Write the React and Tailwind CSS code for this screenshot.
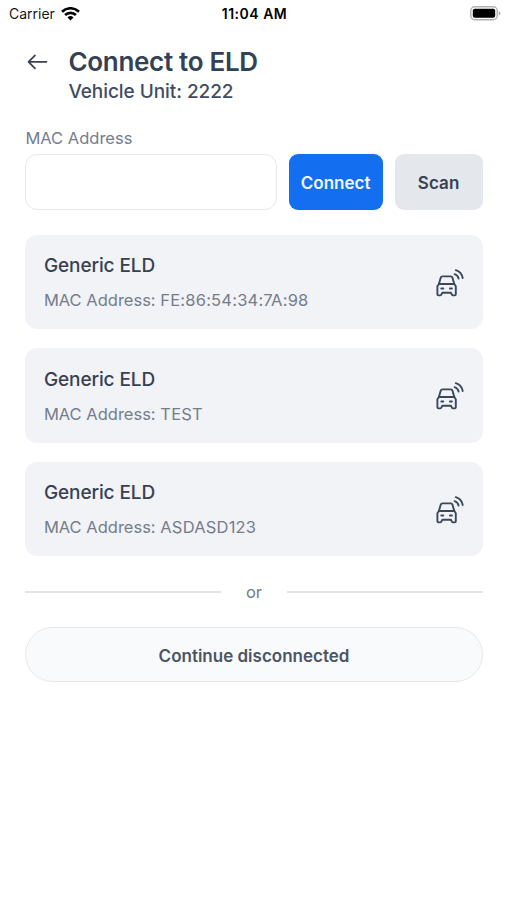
import React from "react";

const devices = ["FE:86:54:34:7A:98", "TEST", "ASDASD123"];

function WifiIcon() {
  return (
    <svg className="ml-[6px] h-[14px] w-[19px]" viewBox="0 0 19 14" fill="none" stroke="#000" strokeWidth="2.6">
      <path d="M1 4.7a12.2 12.2 0 0 1 17 0" />
      <path d="M4.1 8a7.8 7.8 0 0 1 10.8 0" />
      <path d="M9.5 13.4 6.5 10.5a4.3 4.3 0 0 1 6 0Z" fill="#000" stroke="none" />
    </svg>
  );
}

function BatteryIcon() {
  return (
    <svg className="h-[15px] w-[31px]" viewBox="0 0 31 15">
      <rect x="0.8" y="0.8" width="26.4" height="13" rx="4" fill="#fff" stroke="#b1b1b1" strokeWidth="1.4" />
      <rect x="2.8" y="2.8" width="22.4" height="9" rx="2" fill="#000" />
      <path d="M28.7 5.2q1.8.7 1.8 2.1t-1.8 2.1Z" fill="#b1b1b1" />
    </svg>
  );
}

function CarIcon() {
  return (
    <svg className="h-[30px] w-[30px]" viewBox="0 0 30 30" fill="none" stroke="#3b475a" strokeWidth="1.9" strokeLinecap="round" strokeLinejoin="round">
      <path d="M3.9 17 5.7 10.7Q6.1 9.4 7.4 9.4H15.8Q17.1 9.4 17.5 10.7L19.3 17" />
      <path d="M3.9 17H19.3L20.8 19.2V27.3Q20.8 28.4 19.7 28.4H18.1Q17.3 28.4 16.9 27.6L15.9 25.7H7.3L6.3 27.6Q5.9 28.4 5.1 28.4H3.5Q2.4 28.4 2.4 27.3V19.2Z" />
      <path d="M6.3 21.5H8.3M14.9 21.5H16.9" />
      <path d="M19.6 7.1Q22.8 8.1 23.6 11.6M20.8 3.1Q26.5 4.8 27.7 11" />
    </svg>
  );
}

function DeviceCard({ address }) {
  return (
    <button className="flex h-[94.6px] w-full items-center justify-between rounded-[12px] bg-[#f1f3f7] pr-[17.5px] pl-[18.5px] text-left">
      <span className="flex flex-col pt-[2px]">
        <span className="text-[19px] leading-[26px] font-medium tracking-[-0.1px] text-[#374151]">Generic ELD</span>
        <span className="mt-[9px] text-[16.5px] leading-[24px] text-[#757d8c]">
          MAC Address: <span className="tracking-[0.2px]">{address}</span>
        </span>
      </span>
      <CarIcon />
    </button>
  );
}

export default function App() {
  return (
    <div className="h-[900px] w-full overflow-hidden bg-white font-['Inter','Liberation_Sans',sans-serif]">
      <div className="grid h-[27px] grid-cols-3 items-center pr-[6px] pl-[9px]">
        <div className="flex items-center text-[14px] text-[#171717]">
          Carrier
          <WifiIcon />
        </div>
        <div className="-ml-[1px] text-center text-[14px] font-semibold tracking-[0.5px] whitespace-nowrap text-black">11:04 AM</div>
        <div className="flex justify-end">
          <BatteryIcon />
        </div>
      </div>

      <main className="pt-[18px] pr-[24.4px] pl-[25.4px]">
        <header className="flex">
          <svg className="mt-[6px] h-[22px] w-[24px]" viewBox="0 0 24 22" fill="none" stroke="#374151" strokeWidth="1.7" strokeLinecap="round" strokeLinejoin="round">
            <path d="M21.5 10.8H3.5M10 4.3 3.5 10.8 10 17.3" />
          </svg>
          <div className="ml-[19px]">
            <h1 className="text-[26px] leading-[33px] font-semibold tracking-[-0.3px] text-[#334155]">Connect to ELD</h1>
            <p className="text-[19px] leading-[27px] font-medium tracking-[-0.06px] text-[#414c5f]">Vehicle Unit: 2222</p>
          </div>
        </header>

        <label htmlFor="mac" className="mt-[21px] block text-[16.5px] leading-[24px] text-[#757d8c]">
          MAC Address
        </label>
        <div className="mt-[4px] flex h-[56px] gap-[12px]">
          <input id="mac" className="min-w-0 flex-1 rounded-[12px] border-[1.5px] border-[#e8e9ec] bg-white px-4 outline-none" />
          <button className="w-[94px] rounded-[9px] bg-[#146ef0] pt-[3px] text-[17px] font-semibold text-[#eff6ff]">Connect</button>
          <button className="w-[88px] rounded-[9px] bg-[#e4e7eb] pt-[3px] text-[17px] font-semibold tracking-[0.1px] text-[#374151]">Scan</button>
        </div>

        <div className="mt-[24.5px] flex flex-col gap-[19px]">
          {devices.map((address) => (
            <DeviceCard key={address} address={address} />
          ))}
        </div>

        <div className="mt-[24px] flex h-[24px] items-center">
          <div className="h-[2px] flex-1 bg-[#e3e5e8]" />
          <span className="w-[66px] text-center text-[16.5px] text-[#757d8c]">or</span>
          <div className="h-[2px] flex-1 bg-[#e3e5e8]" />
        </div>

        <button className="mt-[23px] h-[55px] w-full rounded-full border-[1.5px] border-[#e5e8eb] bg-[#f9fafc] pt-[3px] text-[17px] font-semibold text-[#4b5563]">
          Continue disconnected
        </button>
      </main>
    </div>
  );
}
